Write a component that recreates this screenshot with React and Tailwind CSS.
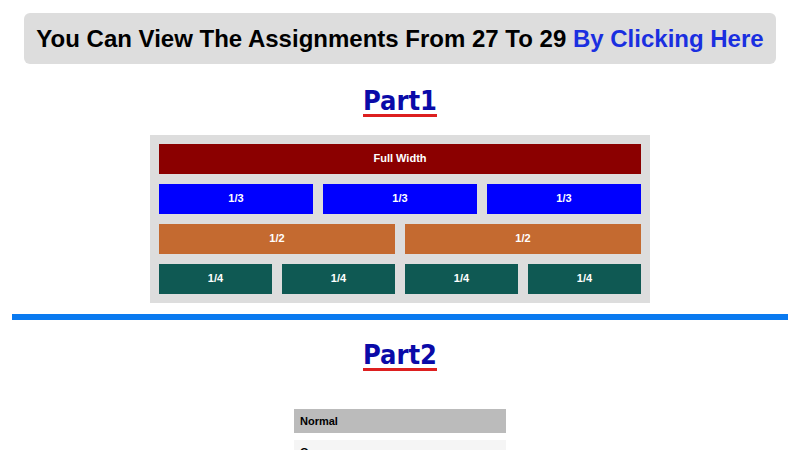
import React from 'react';

const Box = ({ className, children }) => (
  <div className={`h-[30px] flex items-center justify-center text-[11px] font-bold text-white ${className}`}>
    {children}
  </div>
);

const Heading = ({ children }) => (
  <h2
    className="text-center text-[27px] font-bold text-[#0a0aa8] underline decoration-[#dd1f1f] decoration-[3px] underline-offset-[4px]"
    style={{ fontFamily: '"DejaVu Sans Condensed", "DejaVu Sans", sans-serif' }}
  >
    {children}
  </h2>
);

export default function App() {
  return (
    <div className="bg-white min-h-[450px] overflow-hidden" style={{ fontFamily: '"Liberation Sans", Arial, sans-serif' }}>
      <div className="pt-[13px] px-6">
        <div className="bg-[#dddddd] rounded-md h-[51px] flex items-center justify-center">
          <p className="text-[24px] font-bold text-black whitespace-nowrap">
            You Can View The Assignments From 27 To 29{' '}
            <a href="#" className="text-[#1a2fe0]">By Clicking Here</a>
          </p>
        </div>
      </div>

      <div className="mt-[17px]">
        <Heading>Part1</Heading>
      </div>

      <div className="mt-[13px] mx-auto w-[500px] bg-[#dddddd] p-[9px] flex flex-col gap-[10px]">
        <Box className="bg-[#8b0000]">Full Width</Box>
        <div className="grid grid-cols-3 gap-[10px]">
          <Box className="bg-[#0000ff]">1/3</Box>
          <Box className="bg-[#0000ff]">1/3</Box>
          <Box className="bg-[#0000ff]">1/3</Box>
        </div>
        <div className="grid grid-cols-2 gap-[10px]">
          <Box className="bg-[#c46a30]">1/2</Box>
          <Box className="bg-[#c46a30]">1/2</Box>
        </div>
        <div className="grid grid-cols-4 gap-[10px]">
          <Box className="bg-[#0f5953]">1/4</Box>
          <Box className="bg-[#0f5953]">1/4</Box>
          <Box className="bg-[#0f5953]">1/4</Box>
          <Box className="bg-[#0f5953]">1/4</Box>
        </div>
      </div>

      <div className="mt-[11px] mx-3 h-[6px] bg-[#0a7af0]" />

      <div className="mt-[15px]">
        <Heading>Part2</Heading>
      </div>

      <div className="mt-[34px] mx-auto w-[212px] text-[11px] font-bold text-black">
        <div className="bg-[#bbbbbb] h-[24px] flex items-center px-[6px]">Normal</div>
        <div className="mt-[7px] bg-[#f5f5f5] h-[24px] flex items-center px-[6px]">One</div>
      </div>
    </div>
  );
}
